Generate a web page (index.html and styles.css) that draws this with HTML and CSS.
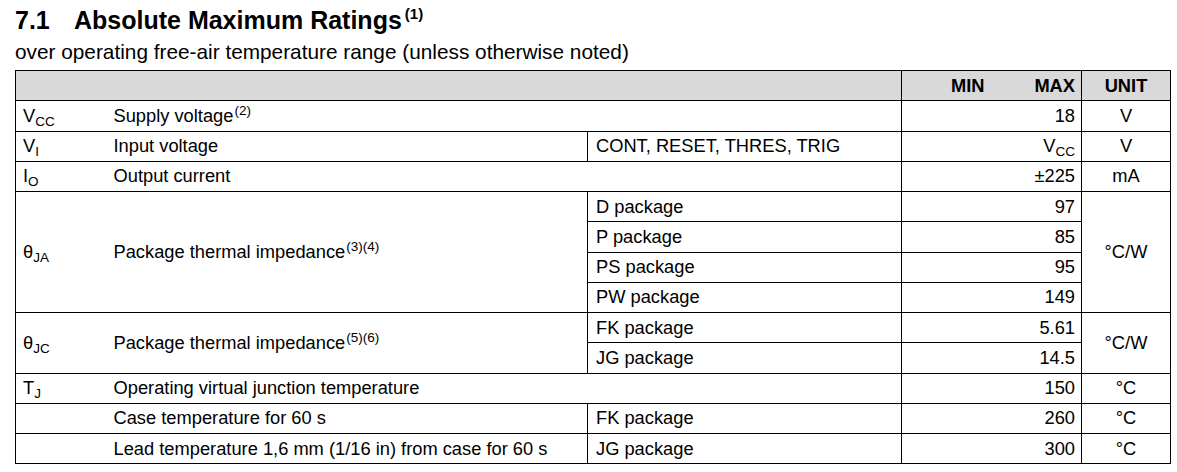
FILE: index.html
```html
<!DOCTYPE html>
<html lang="en">
<head>
<meta charset="utf-8">
<title>Absolute Maximum Ratings</title>
<link rel="stylesheet" href="styles.css">
</head>
<body>
<h1 class="title"><span class="num">7.1</span>Absolute Maximum Ratings<span class="tsup">(1)</span></h1>
<p class="subtitle">over operating free-air temperature range (unless otherwise noted)</p>
<table class="ratings">
  <colgroup>
    <col class="c-sym"><col class="c-desc"><col class="c-cond"><col class="c-min"><col class="c-max"><col class="c-unit">
  </colgroup>
  <tr class="head">
    <td colspan="3"></td>
    <td class="min vl">MIN</td>
    <td class="max">MAX</td>
    <td class="unit vl">UNIT</td>
  </tr>
  <tr>
    <td class="sym">V<span class="sub">CC</span></td>
    <td class="desc" colspan="2">Supply voltage<span class="sup">(2)</span></td>
    <td class="min vl"></td>
    <td class="max">18</td>
    <td class="unit vl">V</td>
  </tr>
  <tr>
    <td class="sym">V<span class="sub">I</span></td>
    <td class="desc">Input voltage</td>
    <td class="cond vl">CONT, RESET, THRES, TRIG</td>
    <td class="min vl"></td>
    <td class="max">V<span class="sub">CC</span></td>
    <td class="unit vl">V</td>
  </tr>
  <tr>
    <td class="sym">I<span class="sub">O</span></td>
    <td class="desc" colspan="2">Output current</td>
    <td class="min vl"></td>
    <td class="max">±225</td>
    <td class="unit vl">mA</td>
  </tr>
  <tr>
    <td class="sym" rowspan="4">θ<span class="sub">JA</span></td>
    <td class="desc" rowspan="4">Package thermal impedance<span class="sup">(3)(4)</span></td>
    <td class="cond vl">D package</td>
    <td class="min vl"></td>
    <td class="max">97</td>
    <td class="unit vl" rowspan="4">°C/W</td>
  </tr>
  <tr>
    <td class="cond vl">P package</td>
    <td class="min vl"></td>
    <td class="max">85</td>
  </tr>
  <tr>
    <td class="cond vl">PS package</td>
    <td class="min vl"></td>
    <td class="max">95</td>
  </tr>
  <tr>
    <td class="cond vl">PW package</td>
    <td class="min vl"></td>
    <td class="max">149</td>
  </tr>
  <tr>
    <td class="sym" rowspan="2">θ<span class="sub">JC</span></td>
    <td class="desc" rowspan="2">Package thermal impedance<span class="sup">(5)(6)</span></td>
    <td class="cond vl">FK package</td>
    <td class="min vl"></td>
    <td class="max">5.61</td>
    <td class="unit vl" rowspan="2">°C/W</td>
  </tr>
  <tr>
    <td class="cond vl">JG package</td>
    <td class="min vl"></td>
    <td class="max">14.5</td>
  </tr>
  <tr>
    <td class="sym">T<span class="sub">J</span></td>
    <td class="desc" colspan="2">Operating virtual junction temperature</td>
    <td class="min vl"></td>
    <td class="max">150</td>
    <td class="unit vl">°C</td>
  </tr>
  <tr>
    <td class="sym"></td>
    <td class="desc">Case temperature for 60 s</td>
    <td class="cond vl">FK package</td>
    <td class="min vl"></td>
    <td class="max">260</td>
    <td class="unit vl">°C</td>
  </tr>
  <tr>
    <td class="sym"></td>
    <td class="desc">Lead temperature 1,6 mm (1/16 in) from case for 60 s</td>
    <td class="cond vl">JG package</td>
    <td class="min vl"></td>
    <td class="max">300</td>
    <td class="unit vl">°C</td>
  </tr>
</table>
</body>
</html>
```
FILE: styles.css
```css
* { box-sizing: border-box; }

body {
  margin: 0;
  padding: 6px 0 0 15px;
  font-family: "Liberation Sans", Arial, sans-serif;
  color: #000;
  background: #fff;
}

.title {
  margin: 0;
  font-size: 25px;
  font-weight: bold;
  line-height: 28px;
}

.title .num {
  display: inline-block;
  width: 59px;
}

.tsup {
  font-size: 15px;
  line-height: 0;
  vertical-align: 10px;
  margin-left: 3px;
}

.subtitle {
  margin: 6px 0 0;
  font-size: 20.8px;
  line-height: 24px;
}

.ratings {
  margin-top: 6px;
  width: 1156px;
  table-layout: fixed;
  border-collapse: collapse;
  border: 1px solid #000;
  font-size: 18.3px;
}

.c-sym { width: 90px; }
.c-desc { width: 482px; }
.c-cond { width: 314px; }
.c-min { width: 89px; }
.c-max { width: 91px; }
.c-unit { width: 89px; }

.ratings td {
  height: 30.25px;
  padding: 0 6px 0 8px;
  border-top: 1px solid #000;
  vertical-align: middle;
  white-space: nowrap;
  line-height: 22px;
}

.ratings td.sym { padding-left: 7px; }

.ratings .vl { border-left: 1px solid #000; }

.ratings .min,
.ratings .max { text-align: right; }

.ratings .unit { text-align: center; padding: 0; }

.head td {
  background: #d9d9d9;
  font-weight: bold;
}

.sub {
  font-size: 13.5px;
  line-height: 0;
  vertical-align: -4px;
}

.sup {
  font-size: 13.5px;
  line-height: 0;
  vertical-align: 7px;
  margin-left: 1px;
}
```
